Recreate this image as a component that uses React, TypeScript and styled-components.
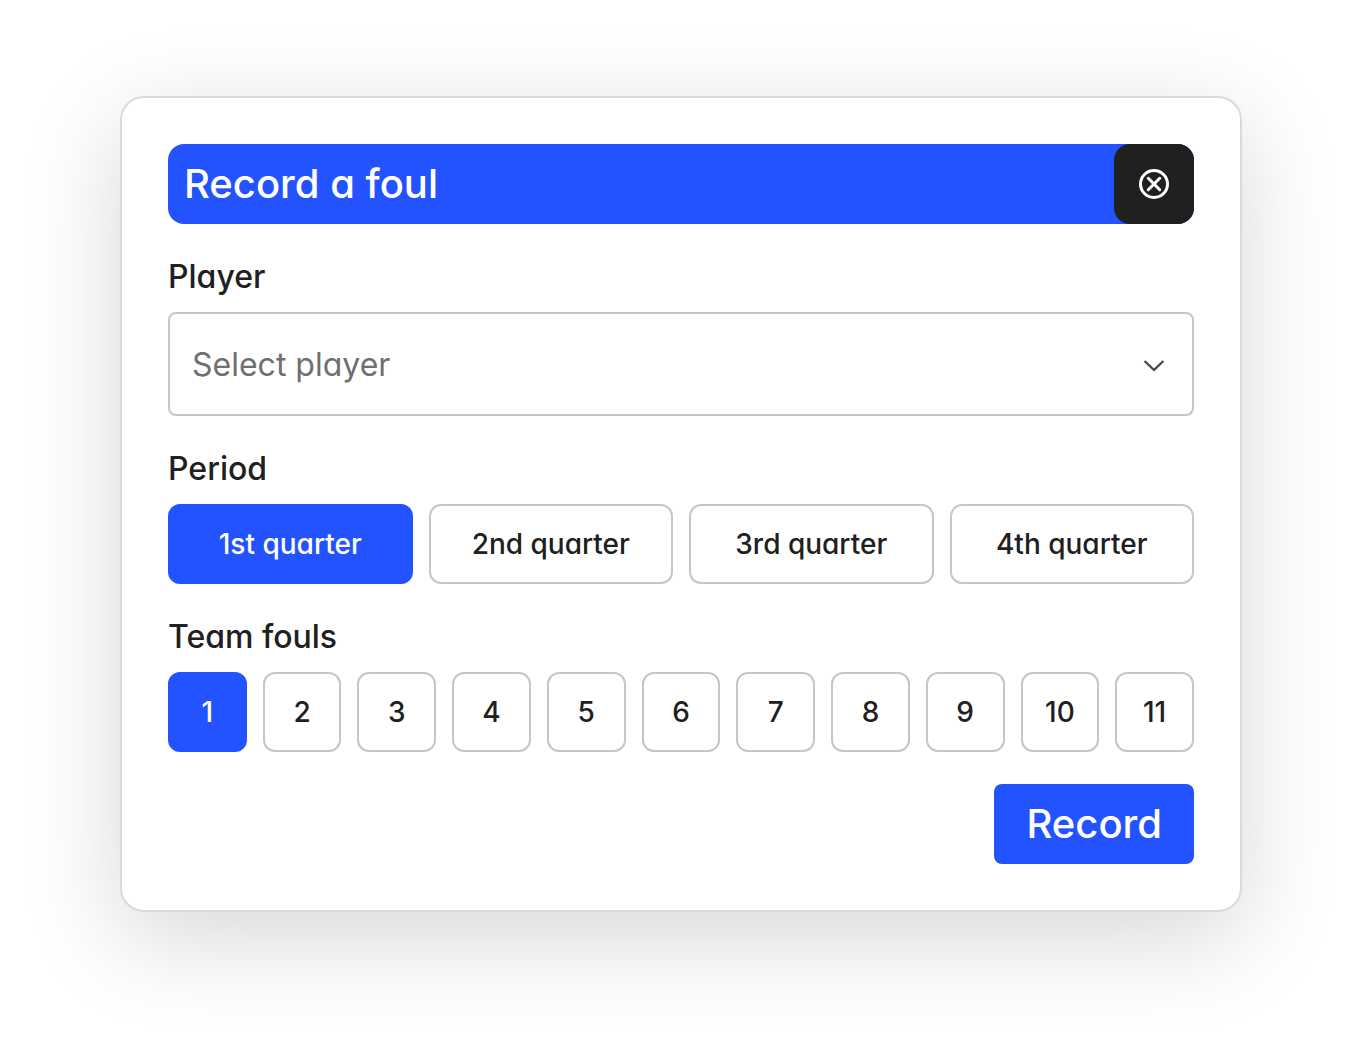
import React, { useState } from "react";
import styled, { createGlobalStyle } from "styled-components";

const blue = "#2353ff";
const ink = "#202020";
const line = "#c6c6c6";

const GlobalStyle = createGlobalStyle`
  *, *::before, *::after { box-sizing: border-box; }
  body {
    margin: 0;
    background: #fff;
    color: ${ink};
    font-family: Inter, "Liberation Sans", sans-serif;
    font-weight: 500;
    font-feature-settings: "cv11";
  }
  button, select, input { font: inherit; font-feature-settings: inherit; }
`;

const Page = styled.main`
  min-height: 100vh;
  padding: 96px 120px;
`;

const Dialog = styled.form`
  display: flex;
  flex-direction: column;
  gap: 32px;
  padding: 46px;
  border: 2px solid #dadada;
  border-radius: 24px;
  background: #fff;
  box-shadow: 0 26px 100px rgba(0, 0, 0, 0.16);
`;

const Header = styled.header`
  display: flex;
  align-items: center;
  justify-content: space-between;
  height: 80px;
  padding-left: 16px;
  border-radius: 16px;
  background: ${blue};
  color: #fff;
`;

const Title = styled.h1`
  margin: 0;
  font-size: 40px;
  font-weight: 500;
  line-height: 48px;
`;

const CloseButton = styled.button`
  display: grid;
  place-items: center;
  width: 80px;
  height: 80px;
  padding: 0;
  border: 0;
  border-radius: 16px;
  background: ${ink};
  color: #fff;
  cursor: pointer;
`;

const Field = styled.div`
  display: flex;
  flex-direction: column;
  gap: 14px;
`;

const FieldLabel = styled.label`
  font-size: 32px;
  line-height: 42px;
`;

const SelectBox = styled.div`
  display: grid;
  align-items: center;

  > * { grid-area: 1 / 1; }
  > svg { justify-self: end; margin-right: 28px; pointer-events: none; }
`;

const Select = styled.select`
  appearance: none;
  width: 100%;
  height: 104px;
  padding: 0 72px 0 22px;
  border: 2px solid ${line};
  border-radius: 8px;
  background: #fff;
  color: #6f6f6f;
  font-size: 32px;
  font-weight: 400;
`;

const Options = styled.div<{ $columns: number }>`
  display: grid;
  grid-template-columns: repeat(${(p) => p.$columns}, minmax(0, 1fr));
  gap: 16px;
`;

const Option = styled.label`
  display: flex;
  align-items: center;
  justify-content: center;
  height: 80px;
  border: 2px solid ${line};
  border-radius: 12px;
  font-size: 28px;
  line-height: 40px;
  cursor: pointer;

  &:has(input:checked) {
    border-color: ${blue};
    background: ${blue};
    color: #fff;
  }
  &:has(input:focus-visible) { outline: 3px solid #9db3ff; }
`;

const Radio = styled.input`
  appearance: none;
  width: 0;
  height: 0;
  margin: 0;
  outline: none;
`;

const RecordButton = styled.button`
  align-self: flex-end;
  height: 80px;
  padding: 0 32px;
  border: 0;
  border-radius: 8px;
  background: ${blue};
  color: #fff;
  font-size: 40px;
  line-height: 48px;
  cursor: pointer;
`;

const CloseIcon = () => (
  <svg width="32" height="32" viewBox="0 0 32 32" fill="none" stroke="currentColor" strokeWidth="3" strokeLinecap="round" aria-hidden="true">
    <circle cx="16" cy="16" r="13.5" />
    <path d="M10.3 10.3l11.4 11.4M21.7 10.3L10.3 21.7" />
  </svg>
);

const ChevronIcon = () => (
  <svg width="24" height="24" viewBox="0 0 24 24" fill="none" stroke="#444" strokeWidth="2.3" aria-hidden="true">
    <path d="M2.6 9l9.4 9 9.4-9" />
  </svg>
);

type PickerProps = {
  name: string;
  title: string;
  options: string[];
};

function Picker({ name, title, options }: PickerProps) {
  const [value, setValue] = useState(options[0]);
  return (
    <Field role="radiogroup" aria-labelledby={`${name}-label`}>
      <FieldLabel as="div" id={`${name}-label`}>{title}</FieldLabel>
      <Options $columns={options.length}>
        {options.map((option) => (
          <Option key={option}>
            <Radio
              type="radio"
              name={name}
              value={option}
              checked={value === option}
              onChange={() => setValue(option)}
            />
            {option}
          </Option>
        ))}
      </Options>
    </Field>
  );
}

const quarters = ["1st quarter", "2nd quarter", "3rd quarter", "4th quarter"];
const fouls = Array.from({ length: 11 }, (_, i) => String(i + 1));

export default function App() {
  return (
    <>
      <GlobalStyle />
      <Page>
        <Dialog onSubmit={(e) => e.preventDefault()}>
          <Header>
            <Title>Record a foul</Title>
            <CloseButton type="button" aria-label="Close">
              <CloseIcon />
            </CloseButton>
          </Header>
          <Field>
            <FieldLabel htmlFor="player">Player</FieldLabel>
            <SelectBox>
              <Select id="player" defaultValue="">
                <option value="">Select player</option>
              </Select>
              <ChevronIcon />
            </SelectBox>
          </Field>
          <Picker name="period" title="Period" options={quarters} />
          <Picker name="fouls" title="Team fouls" options={fouls} />
          <RecordButton type="submit">Record</RecordButton>
        </Dialog>
      </Page>
    </>
  );
}
